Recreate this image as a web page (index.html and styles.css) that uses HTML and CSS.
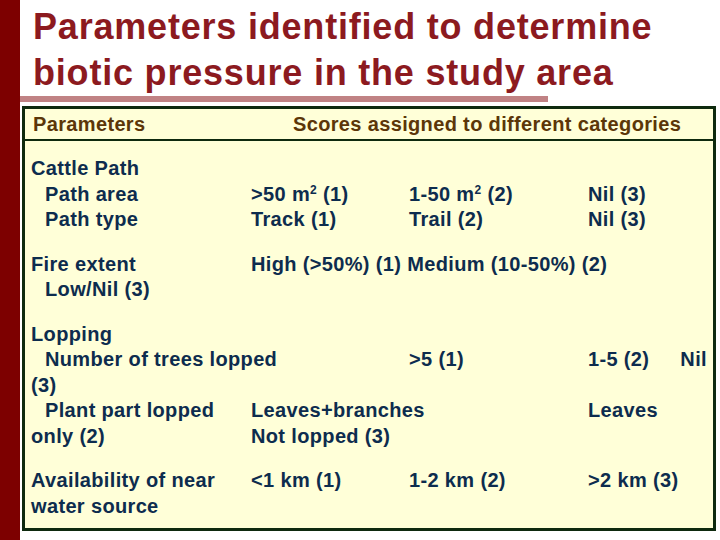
FILE: index.html
```html
<!DOCTYPE html>
<html>
<head>
<meta charset="utf-8">
<link rel="stylesheet" href="styles.css">
</head>
<body>
<div class="slide">
  <div class="sidebar"></div>
  <div class="main">
    <h1 class="title">Parameters identified to determine<br>biotic pressure in the study area</h1>
    <div class="rule"></div>
    <div class="table">
      <div class="head">
        <div class="hcell">Parameters</div>
        <div class="hcell">Scores assigned to different categories</div>
      </div>
      <div class="body">
        <div class="group">
          <div class="line"><div class="c c1">Cattle Path</div></div>
          <div class="line"><div class="c c1 ind">Path area</div><div class="c">&gt;50 m<sup>2</sup> (1)</div><div class="c">1-50 m<sup>2</sup> (2)</div><div class="c">Nil (3)</div></div>
          <div class="line"><div class="c c1 ind">Path type</div><div class="c">Track (1)</div><div class="c">Trail (2)</div><div class="c">Nil (3)</div></div>
        </div>
        <div class="group">
          <div class="line"><div class="c c1">Fire extent</div><div class="c span">High (&gt;50%) (1) Medium (10-50%) (2)</div></div>
          <div class="line"><div class="c c1 ind">Low/Nil (3)</div></div>
        </div>
        <div class="group">
          <div class="line"><div class="c c1">Lopping</div></div>
          <div class="line"><div class="c wide ind">Number of trees lopped</div><div class="c">&gt;5 (1)</div><div class="c">1-5 (2)<span class="nil">Nil</span></div></div>
          <div class="line"><div class="c c1">(3)</div></div>
          <div class="line"><div class="c c1 ind">Plant part lopped</div><div class="c span2">Leaves+branches</div><div class="c">Leaves</div></div>
          <div class="line"><div class="c c1">only (2)</div><div class="c span2">Not lopped (3)</div></div>
        </div>
        <div class="group">
          <div class="line"><div class="c c1">Availability of near</div><div class="c">&lt;1 km (1)</div><div class="c">1-2 km (2)</div><div class="c">&gt;2 km (3)</div></div>
          <div class="line"><div class="c c1">water source</div></div>
        </div>
      </div>
    </div>
  </div>
</div>
</body>
</html>
```

FILE: styles.css
```css
html, body {
  margin: 0;
  padding: 0;
  background: #ffffff;
}
.slide {
  width: 720px;
  height: 540px;
  display: flex;
  overflow: hidden;
  font-family: "Liberation Sans", Arial, sans-serif;
}
.sidebar {
  width: 20px;
  flex: none;
  background: #7d0000;
}
.main {
  flex: 1;
  display: flex;
  flex-direction: column;
}
.title {
  margin: 4px 0 0 0;
  padding-left: 13px;
  height: 92px;
  font-size: 36px;
  line-height: 46px;
  font-weight: bold;
  letter-spacing: 0.8px;
  color: #8c1a1f;
  white-space: nowrap;
}
.rule {
  width: 528px;
  height: 6px;
  background: #c08284;
}
.table {
  margin: 4px 0 0 2px;
  width: 688px;
  height: 419px;
  border: 3px solid #0e2a0e;
  background: #ffffd8;
  display: flex;
  flex-direction: column;
}
.head {
  display: grid;
  grid-template-columns: 260px 1fr;
  padding-left: 8px;
  height: 30px;
  border-bottom: 2px solid #0e2a0e;
  font-size: 20px;
  line-height: 30px;
  font-weight: bold;
  letter-spacing: 0.35px;
  color: #5c3608;
}
.body {
  padding: 15px 0 0 6px;
  display: flex;
  flex-direction: column;
  gap: 19px;
  color: #0d2c4e;
  font-size: 20px;
  line-height: 25.5px;
  font-weight: bold;
  letter-spacing: 0.35px;
}
.line {
  display: grid;
  grid-template-columns: 220px 158px 179px 1fr;
  white-space: nowrap;
}
.c1 { grid-column: 1; }
.ind { padding-left: 14px; }
.span { grid-column: 2 / 5; }
.span2 { grid-column: 2 / 4; }
.wide { grid-column: 1 / 3; }
.nil { margin-left: 31px; }
sup {
  font-size: 12px;
  line-height: 0;
  vertical-align: 7px;
}
```
